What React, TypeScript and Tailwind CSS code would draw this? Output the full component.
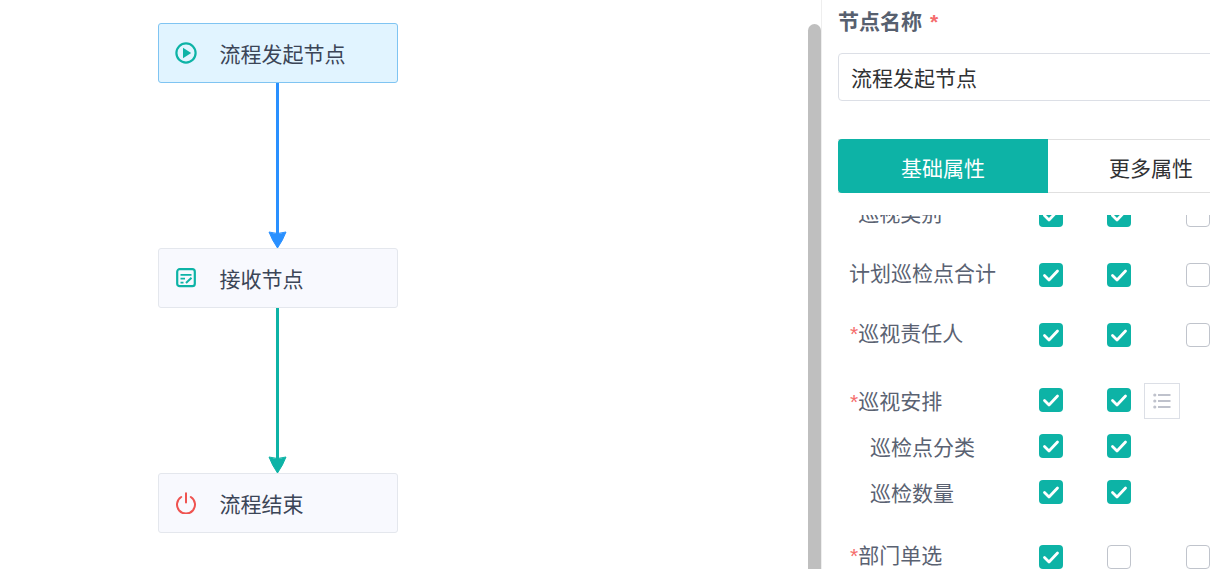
const Check = ({ on }: { on: boolean }) =>
  on ? (
    <span className="flex h-6 w-6 shrink-0 items-center justify-center rounded-[4px] bg-[#0db3a6]">
      <svg viewBox="0 0 24 24" className="h-6 w-6" fill="none" stroke="#fff" strokeWidth="2.8" strokeLinecap="round" strokeLinejoin="round">
        <path d="M5.5 12.5 L10 17 L18.5 8" />
      </svg>
    </span>
  ) : (
    <span className="block h-6 w-6 shrink-0 rounded-[4px] border border-[#c0c4cc] bg-white" />
  );

const Node = ({ label, active, icon }: { label: string; active?: boolean; icon: React.ReactNode }) => (
  <div
    className={`flex h-[60px] w-[240px] items-center rounded-[3px] border pl-[16px] ${
      active ? "border-[#7fc4f2] bg-[#e1f4ff]" : "border-[#e4e7ed] bg-[#f8f9fe]"
    }`}
  >
    <span className="flex w-[22px] items-center justify-center">{icon}</span>
    <span className="ml-[22.5px] pt-[2px] text-[21px] leading-none text-[#3b4557]">{label}</span>
  </div>
);

const Connector = ({ color }: { color: string }) => (
  <svg width="240" viewBox="0 0 240 165" className="block h-[165px] overflow-visible">
    <path d="M119.5 0 V151" stroke={color} strokeWidth="3" fill="none" />
    <path d="M111 149 Q119.5 152 128 149 Q125 157 119.5 165 Q114 157 111 149 Z" fill={color} stroke={color} strokeWidth="1" strokeLinejoin="round" />
  </svg>
);

type RowT = { label: string; star?: boolean; indent?: boolean; low?: boolean; h: number; c: boolean[]; third?: boolean; list?: boolean };

const Row = ({ r }: { r: RowT }) => (
  <div className="flex items-center" style={{ height: r.h }}>
    <div
      className={`w-[201px] shrink-0 text-[21px] leading-none text-[#5a6272] ${r.low ? "pt-[2px]" : "pb-[4px]"} ${
        r.indent ? "pl-[32px]" : r.star ? "pl-[12px]" : "pl-[11px]"
      }`}
    >
      {r.star && <span className="text-[#f56c6c]">*</span>}
      {r.label}
    </div>
    <Check on={r.c[0]} />
    <span className="ml-[44px]"><Check on={r.c[1]} /></span>
    {r.third && <span className="ml-[55px]"><Check on={false} /></span>}
    {r.list && (
      <span className="ml-[13px] mt-[2px] flex h-9 w-9 items-center justify-center border border-[#dcdfe6]">
        <svg width="18" height="18" viewBox="0 0 18 18" fill="#bfc2cc">
          <circle cx="1.8" cy="3" r="1.6" /><circle cx="1.8" cy="9" r="1.6" /><circle cx="1.8" cy="15" r="1.6" />
          <rect x="5" y="2" width="12.5" height="2" /><rect x="5" y="8" width="12.5" height="2" /><rect x="5" y="14" width="12.5" height="2" />
        </svg>
      </span>
    )}
  </div>
);

export default function App() {
  return (
    <div
      className="flex h-[569px] w-[1210px] overflow-hidden bg-white"
      style={{ fontFamily: '"Liberation Sans","Noto Sans CJK SC",sans-serif' }}
    >
      <div className="flex w-[808px] shrink-0 flex-col pl-[158px] pt-[23px]">
        <Node
          active
          label="流程发起节点"
          icon={
            <svg width="22" height="22" viewBox="0 0 22 22" fill="none">
              <circle cx="11" cy="11" r="9.6" stroke="#0db3a6" strokeWidth="2.2" />
              <path d="M8 5.8 L16.2 11 L8 16.2 Z" fill="#0db3a6" />
            </svg>
          }
        />
        <Connector color="#2990ff" />
        <Node
          label="接收节点"
          icon={
            <svg width="20" height="20" viewBox="0 0 20 20" fill="none" stroke="#0db3a6" strokeWidth="2.2">
              <rect x="1.2" y="1.2" width="17.6" height="17" rx="2.5" />
              <path d="M4.5 6.8 H15.5 M4.5 10.6 H9 M4.5 14.6 H7.5" strokeWidth="1.8" />
              <path d="M10 15 L15.5 9.8" strokeWidth="2" />
            </svg>
          }
        />
        <Connector color="#0db3a6" />
        <Node
          label="流程结束"
          icon={
            <svg width="22" height="22" viewBox="0 0 22 22" fill="none" stroke="#ef5350" strokeWidth="2" strokeLinecap="round">
              <path d="M6.2 5 A9 9 0 1 0 15.8 5" />
              <path d="M11 1.2 V10.5" />
            </svg>
          }
        />
      </div>

      <div className="w-[13px] shrink-0 pt-[24px]">
        <div className="h-full rounded-t-[7px] bg-[#bfbfbf]" />
      </div>

      <div className="flex w-[389px] shrink-0 flex-col border-l border-[#eeeeee] pl-[16px]">
        <div className="flex h-[43px] shrink-0 items-center text-[21px] font-bold leading-none text-[#57606f]">
          节点名称<span className="ml-[8px] text-[#f56c6c]">*</span>
        </div>
        <div className="mt-[10px] flex h-[48px] w-[420px] shrink-0 items-center rounded-[4px] border border-[#dcdfe6] pl-[12px] pt-[2px] text-[21px] leading-none text-[#303133]">
          流程发起节点
        </div>
        <div className="mt-[38px] flex h-[54px] w-[420px] shrink-0 border-y border-[#e0e0e0]">
          <div className="-my-px flex h-[54px] w-[210px] items-center justify-center rounded-l-[4px] bg-[#0db3a6] pt-[4px] text-[21px] leading-none text-white">
            基础属性
          </div>
          <div className="flex w-[210px] items-center justify-center pr-[4px] pt-[4px] text-[21px] leading-none text-[#303133]">
            更多属性
          </div>
        </div>
        <div className="mt-[22px] min-h-0 flex-1 overflow-hidden">
          <div className="-mt-[30px] w-[400px]">
            <Row r={{ label: "巡视类别", star: true, h: 60, c: [true, true], third: true }} />
            <Row r={{ label: "计划巡检点合计", h: 60, c: [true, true], third: true }} />
            <Row r={{ label: "巡视责任人", star: true, h: 60, c: [true, true], third: true }} />
            <div className="pt-[12px]">
              <Row r={{ label: "巡视安排", star: true, low: true, h: 46, c: [true, true], list: true }} />
              <Row r={{ label: "巡检点分类", indent: true, low: true, h: 46, c: [true, true] }} />
              <Row r={{ label: "巡检数量", indent: true, low: true, h: 46, c: [true, true] }} />
            </div>
            <div className="pt-[12px]">
              <Row r={{ label: "部门单选", star: true, h: 60, c: [true, false], third: true }} />
            </div>
          </div>
        </div>
      </div>
    </div>
  );
}
